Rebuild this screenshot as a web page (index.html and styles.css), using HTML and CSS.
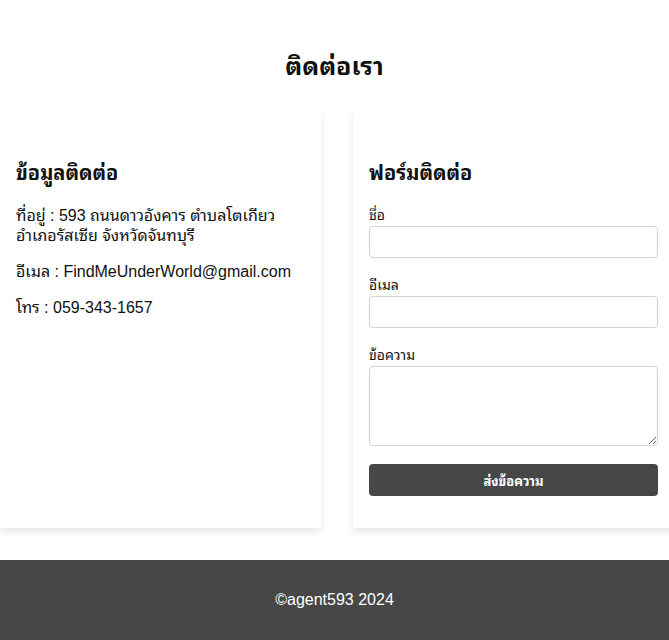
FILE: index.html
```html
<!DOCTYPE html>
<html lang="th">
<head>
<meta charset="utf-8">
<title>ติดต่อเรา</title>
<link rel="stylesheet" href="styles.css">
</head>
<body>
<main class="contact">
  <h2 class="contact-title">ติดต่อเรา</h2>
  <div class="cards">
    <section class="card">
      <h3 class="card-title">ข้อมูลติดต่อ</h3>
      <p class="info">ที่อยู่ : 593 ถนนดาวอังคาร ตำบลโตเกียว<br>อำเภอรัสเซีย จังหวัดจันทบุรี</p>
      <p class="info">อีเมล : FindMeUnderWorld@gmail.com</p>
      <p class="info">โทร : 059-343-1657</p>
    </section>
    <section class="card">
      <h3 class="card-title">ฟอร์มติดต่อ</h3>
      <form class="form">
        <label class="label" for="name">ชื่อ</label>
        <input class="field" id="name" type="text">
        <label class="label" for="email">อีเมล</label>
        <input class="field" id="email" type="email">
        <label class="label" for="msg">ข้อความ</label>
        <textarea class="field area" id="msg"></textarea>
        <button class="btn" type="button">ส่งข้อความ</button>
      </form>
    </section>
  </div>
</main>
<footer class="footer">©agent593 2024</footer>
</body>
</html>
```
FILE: styles.css
```css
html, body {
  margin: 0;
  padding: 0;
  overflow-x: hidden;
}
body {
  font-family: "Liberation Sans", "Noto Sans Thai Looped", "Loma", "Garuda", "Tlwg Typo", "Noto Sans Thai", "Noto Sans Thai UI", sans-serif;
  color: #111;
  background: #fff;
}
.contact {
  padding: 32px 0 32px;
}
.contact-title {
  text-align: center;
  font-size: 25px;
  font-weight: bold;
  line-height: 28px;
  margin: 20px 0 32px;
}
.cards {
  display: grid;
  grid-template-columns: 321px 321px;
  gap: 32px;
  width: 674px;
}
.card {
  background: #fff;
  padding: 32px 16px;
  box-shadow: 0 4px 8px rgba(0, 0, 0, 0.1);
}
.card-title {
  font-size: 20px;
  line-height: 23px;
  font-weight: bold;
  margin: 18px 0 21px;
}
.info {
  font-size: 16px;
  line-height: 20px;
  margin: 0 0 16px;
}
.form {
  display: flex;
  flex-direction: column;
}
.label {
  font-size: 14px;
  line-height: 18px;
  margin-bottom: 2px;
}
.field {
  box-sizing: border-box;
  height: 32px;
  border: 1px solid #cfd3da;
  border-radius: 4px;
  margin: 0 0 18px;
  font: inherit;
  padding: 4px 8px;
}
.area {
  height: 80px;
  resize: vertical;
}
.btn {
  height: 32px;
  border: none;
  border-radius: 4px;
  background: #474747;
  color: #fff;
  font-family: inherit;
  font-size: 13px;
  font-weight: bold;
}
.footer {
  background: #474747;
  color: #fff;
  text-align: center;
  font-size: 16px;
  line-height: 20px;
  padding: 30px 0;
}
```
